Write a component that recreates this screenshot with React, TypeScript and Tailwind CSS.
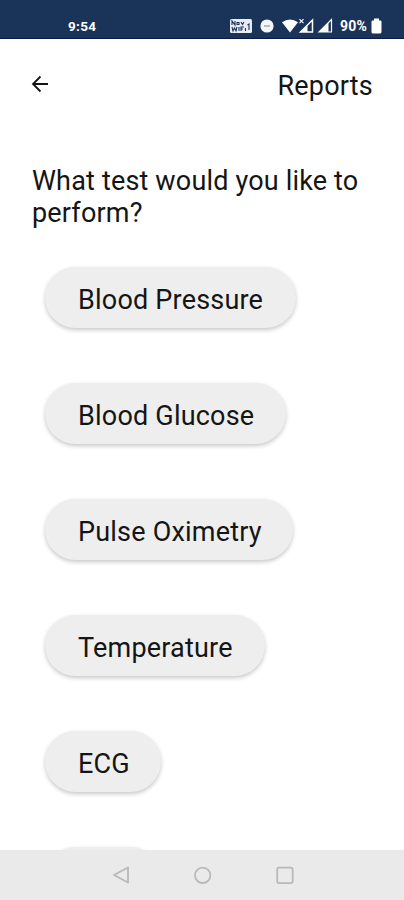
import clsx from 'clsx';

type TestButtonProps = {
  label: string;
  width: string;
};

const TESTS: TestButtonProps[] = [
  { label: 'Blood Pressure', width: 'w-[251px]' },
  { label: 'Blood Glucose', width: 'w-[241px]' },
  { label: 'Pulse Oximetry', width: 'w-[248px]' },
  { label: 'Temperature', width: 'w-[220px]' },
  { label: 'ECG', width: 'w-[116px]' },
  { label: '', width: 'w-[116px]' },
];

function StatusBar() {
  return (
    <header className="flex h-[39px] shrink-0 items-end justify-between border-b border-[#0b1747] bg-[#193359] pr-[22px] pb-[4px] pl-[68px] text-white">
      <span className="text-[13.5px] leading-[15px] font-bold tracking-[0.3px]">9:54</span>
      <div className="flex h-[16px] items-center">
        <svg width="22" height="14" viewBox="0 0 22 14" className="mr-[8px]">
          <rect width="22" height="14" rx="1.5" fill="#e9edf3" />
          <g fill="none" stroke="#193359" strokeWidth="1.1">
            <path d="M2 6V2l3 4V2M7 3.5h2v2H7zM11 3l1.5 2.5L14 3M2 8l1 4 1.5-3L6 12l1-4M9 8v4M11 12V8h3M11 10h2M15.500 9v3" />
            <path d="M17.5 6l1.500-1v6" />
          </g>
        </svg>
        <svg width="14" height="14" viewBox="0 0 14 14" className="mr-[8px]">
          <circle cx="7" cy="7" r="6.6" fill="#f4f6fa" />
          <path d="M4 7h6" stroke="#a5aebe" strokeWidth="1.6" />
        </svg>
        <svg width="51" height="16" viewBox="0 0 51 16" className="mr-[7px]">
          <path d="M0 4.2Q8 -1 16 4.2L8 14.500z" fill="#fff" />
          <path d="M17.500 1.200l4 4M21.500 1.200l-4 4" stroke="#fff" strokeWidth="1.1" />
          <path d="M18.500 14L30.500 2v12z" fill="none" stroke="#fff" strokeWidth="1.5" />
          <path d="M18.500 14l7-7v7z" fill="#fff" />
          <path d="M37 14L49.500 1.500V14z" fill="none" stroke="#fff" strokeWidth="1.2" />
          <path d="M37 14l9.500-9.500V14z" fill="#fff" />
        </svg>
        <span className="mr-[4px] text-[14px] leading-[16px] font-bold tracking-[0.2px]">90%</span>
        <svg width="11" height="16" viewBox="0 0 11 16">
          <path d="M3 0.500h5v2h1.200q1.300 0 1.300 1.300v10Q10.500 15.500 9 15.500H2Q0.500 15.500 0.500 14V3.800Q0.500 2.500 1.800 2.500H3z" fill="#fff" />
        </svg>
      </div>
    </header>
  );
}

function TestButton({ label, width }: TestButtonProps) {
  return (
    <button
      className={clsx(
        'h-[61px] shrink-0 rounded-full bg-[#eeeeee] pt-[6px] pl-[33px] text-left text-[27px] tracking-[0.2px] whitespace-nowrap shadow-[0_2px_4px_rgba(0,0,0,0.22)]',
        width,
      )}
    >
      {label}
    </button>
  );
}

function NavigationBar() {
  return (
    <footer className="h-[50px] shrink-0 bg-[#eaeaea] pl-[112px]">
      <svg width="183" height="50" viewBox="0 0 183 50" fill="none" stroke="#b9b9b9" strokeWidth="1.8" strokeLinejoin="round">
        <path d="M2 25l14-7.500v15z" />
        <circle cx="90.700" cy="25.300" r="7.700" />
        <rect x="165.200" y="17.600" width="15.500" height="15.500" rx="2" />
      </svg>
    </footer>
  );
}

export default function App() {
  return (
    <div className="flex h-[900px] w-[404px] flex-col overflow-hidden bg-white font-['Roboto',sans-serif] text-[#151515]">
      <StatusBar />
      <main className="min-h-0 flex-1 overflow-hidden">
        <div className="flex h-[92px] items-center justify-between pr-[31px] pl-[31px]">
          <button aria-label="Back" className="pb-[2px]">
            <svg width="18" height="18" viewBox="0 0 18 18" fill="none" stroke="#151515" strokeWidth="1.8">
              <path d="M17 9H2M9.500 1.500L2 9l7.500 7.500" />
            </svg>
          </button>
          <h1 className="pt-[2px] text-[27px] leading-[32px] tracking-[0.2px]">Reports</h1>
        </div>
        <h2 className="mt-[34px] pl-[32px] text-[27px] leading-[32px] tracking-[0.17px]">
          What test would you like to
          <br />
          perform?
        </h2>
        <div className="mt-[38px] flex flex-col items-start gap-[55px] pl-[45px]">
          {TESTS.map((test, index) => (
            <TestButton key={index} label={test.label} width={test.width} />
          ))}
        </div>
      </main>
      <NavigationBar />
    </div>
  );
}
